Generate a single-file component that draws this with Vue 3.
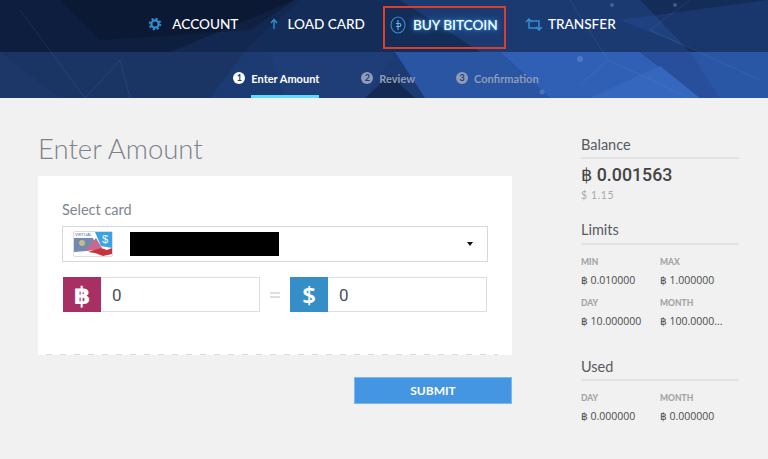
<template>
  <div class="page">
    <header class="hero">
      <svg class="hero-bg" viewBox="0 0 768 98" preserveAspectRatio="none">
        <rect width="768" height="98" fill="#1d3b73" />
        <polygon points="0,0 300,0 250,45 210,98 0,98" fill="#1a3464" />
        <polygon points="0,52 60,98 0,98" fill="#1c3768" />
        <polygon points="270,52 395,52 365,98 285,98" fill="#1f3e78" />
        <polygon points="390,75 415,98 365,98" fill="#152a52" />
        <polygon points="395,52 500,52 550,98 425,98" fill="#2a55a3" />
        <polygon points="500,52 640,52 700,98 550,98" fill="#3060b6" />
        <polygon points="640,52 768,52 768,98 700,98" fill="#284f9c" />
        <polygon points="690,52 768,52 768,98 720,98" fill="#2a56a6" />
        <polygon points="590,98 660,66 700,98" fill="#3667bf" />
        <rect width="768" height="52" fill="#0b1a38" opacity="0.45" />
        <polygon points="0,0 295,0 170,52 0,52" fill="#0a1630" opacity="0.55" />
        <polygon points="60,0 295,0 250,30 100,40" fill="#081226" opacity="0.35" />
        <polygon points="400,0 640,0 690,52 480,52" fill="#2a56a3" opacity="0.35" />
        <polygon points="620,20 768,0 768,52 700,52" fill="#2a54a0" opacity="0.3" />
        <g stroke="#7c9ad0" stroke-width="0.5" opacity="0.3" fill="none">
          <path d="M20 10 L85 98 M85 98 L120 60 L130 98 M580 85 L608 60 L690 98 M608 60 L570 0 M690 0 L650 30 L760 80" />
        </g>
        <g fill="#7fa0d8" opacity="0.4">
          <circle cx="580" cy="59" r="3" />
          <circle cx="612" cy="5" r="2" />
          <circle cx="675" cy="5" r="2" />
          <circle cx="542" cy="92" r="2.5" />
        </g>
      </svg>

      <nav class="nav">
        <a v-for="item in navItems" :key="item.label" class="nav-item" :class="{ active: item.active }">
          <svg v-if="item.icon === 'gear'" class="nav-icon gear" viewBox="0 0 14 14">
            <circle cx="7" cy="7" r="3.6" fill="none" stroke="#2f8fd0" stroke-width="2.2" />
            <circle cx="7" cy="7" r="5.2" fill="none" stroke="#2f8fd0" stroke-width="2.2" stroke-dasharray="2 2.08" />
          </svg>
          <svg v-else-if="item.icon === 'up'" class="nav-icon up" viewBox="0 0 8 12">
            <path d="M4 11V2M1 5l3-3.5L7 5" fill="none" stroke="#2f8fd0" stroke-width="1.4" />
          </svg>
          <svg v-else-if="item.icon === 'coin'" class="nav-icon coin" viewBox="0 0 16 18">
            <ellipse cx="8" cy="9" rx="7" ry="8" fill="none" stroke="#2f8fd0" stroke-width="1.1" />
            <path d="M8 4v10M6 7.5h3.4a1.3 1.3 0 0 1 0 3H6" fill="none" stroke="#5db5ee" stroke-width="1.1" />
          </svg>
          <svg v-else class="nav-icon swap" viewBox="0 0 18 13">
            <path d="M4 1v9h10M1 4l3-3 3 3M14 12V3H5M11 9l3 3 3-3" fill="none" stroke="#2f8fd0" stroke-width="1.5" />
          </svg>
          <span>{{ item.label }}</span>
        </a>
      </nav>

      <div class="steps">
        <div v-for="(step, i) in steps" :key="step" class="step" :class="{ current: i === 0 }">
          <span class="step-num">{{ i + 1 }}</span>
          <span class="step-label">{{ step }}</span>
        </div>
      </div>
    </header>

    <main class="content">
      <section class="left">
        <h1 class="title">Enter Amount</h1>
        <div class="card">
          <label class="field-label">Select card</label>
          <div class="select">
            <svg class="card-thumb" viewBox="0 0 40 26">
              <rect x="0.5" y="0.5" width="39" height="25" rx="1.5" fill="#fff" stroke="#ddd" />
              <polygon points="1,7 20,7 24,18 14,20 1,21" fill="#6f8bb0" />
              <circle cx="9" cy="12" r="3" fill="#c9b88a" />
              <polygon points="12,19 23,7 29,17 25,20" fill="#c8688f" />
              <polygon points="15,21 28,17 34,19 39,17 39,23 30,25 22,22" fill="#c8323f" />
              <polygon points="22,1 39,1 39,17 28,15" fill="#3aa3e6" />
              <text x="29" y="12" class="thumb-dollar">$</text>
              <text x="2" y="5" class="thumb-text">VIRTUAL</text>
            </svg>
            <div class="redacted"></div>
            <span class="caret"></span>
          </div>
          <div class="amounts">
            <div class="amount">
              <span class="addon addon-btc">฿</span>
              <span class="amount-value">0</span>
            </div>
            <span class="equals">=</span>
            <div class="amount">
              <span class="addon addon-usd">$</span>
              <span class="amount-value">0</span>
            </div>
          </div>
        </div>
        <button class="submit">SUBMIT</button>
      </section>

      <aside class="side">
        <h2 class="side-title">Balance</h2>
        <div class="balance">฿ 0.001563</div>
        <div class="balance-usd">$ 1.15</div>

        <h2 class="side-title limits-title">Limits</h2>
        <div class="stats">
          <div v-for="s in limits" :key="s.label">
            <div class="stat-label">{{ s.label }}</div>
            <div class="stat-value">{{ s.value }}</div>
          </div>
        </div>

        <h2 class="side-title used-title">Used</h2>
        <div class="stats">
          <div v-for="s in used" :key="s.label">
            <div class="stat-label">{{ s.label }}</div>
            <div class="stat-value">{{ s.value }}</div>
          </div>
        </div>
      </aside>
    </main>
  </div>
</template>

<script setup>
const navItems = [
  { label: 'ACCOUNT', icon: 'gear' },
  { label: 'LOAD CARD', icon: 'up' },
  { label: 'BUY BITCOIN', icon: 'coin', active: true },
  { label: 'TRANSFER', icon: 'swap' }
]

const steps = ['Enter Amount', 'Review', 'Confirmation']

const limits = [
  { label: 'MIN', value: '฿ 0.010000' },
  { label: 'MAX', value: '฿ 1.000000' },
  { label: 'DAY', value: '฿ 10.000000' },
  { label: 'MONTH', value: '฿ 100.0000...' }
]

const used = [
  { label: 'DAY', value: '฿ 0.000000' },
  { label: 'MONTH', value: '฿ 0.000000' }
]
</script>

<style>
html, body {
  margin: 0;
  background: #f1f1f1;
}
</style>

<style scoped>
.page {
  width: 768px;
  height: 459px;
  overflow: hidden;
  background: #f1f1f1;
  font-family: Lato, "DejaVu Sans", sans-serif;
  color: #444;
}

.hero {
  position: relative;
  height: 98px;
}

.hero-bg {
  position: absolute;
  inset: 0;
  width: 100%;
  height: 100%;
}

.nav {
  position: relative;
  display: flex;
  justify-content: center;
  height: 52px;
  padding-top: 6px;
  padding-right: 4px;
  box-sizing: border-box;
}

.nav-item {
  display: flex;
  align-items: center;
  height: 43px;
  box-sizing: border-box;
  padding-bottom: 7px;
  color: #fff;
  font-size: 13.6px;
  font-weight: 500;
  white-space: nowrap;
}

.nav-item:nth-child(1) { margin-right: 32px; }
.nav-item:nth-child(2) { margin-right: 18px; }
.nav-item:nth-child(3) { margin-right: 19px; }

.nav-item.active {
  border: 2px solid #d9402a;
  width: 123px;
  padding-left: 5px;
  padding-bottom: 5px;
  text-shadow: 0 0 6px #3fa9f5, 0 0 2px #3fa9f5;
}

.nav-icon {
  flex: none;
}

.gear { width: 14px; height: 14px; margin-right: 10px; }
.up { width: 8px; height: 12px; margin-right: 9px; }
.coin { width: 16px; height: 18px; margin-right: 7px; }
.swap { width: 18px; height: 13px; margin-right: 5px; }

.steps {
  position: relative;
  display: flex;
  justify-content: center;
  height: 46px;
  padding-left: 4px;
  box-sizing: border-box;
}

.step {
  display: flex;
  align-items: flex-start;
  height: 46px;
  box-sizing: border-box;
  padding-top: 20px;
  color: #8e9cb8;
  font-size: 11px;
  font-weight: 700;
}

.step:nth-child(1) { margin-right: 42px; }
.step:nth-child(2) { margin-right: 41px; }

.step-num {
  width: 12px;
  height: 12px;
  margin-right: 6px;
  border-radius: 50%;
  background: #8e9cb8;
  color: #1f3e78;
  font-size: 9px;
  line-height: 12px;
  text-align: center;
}

.step-label {
  position: relative;
  line-height: 13px;
}

.step.current {
  color: #fff;
}

.step.current .step-num {
  background: #fff;
}

.step.current .step-label::after {
  content: "";
  position: absolute;
  left: 0;
  right: 0;
  top: 23px;
  height: 3px;
  background: #5fdcf5;
}

.content {
  display: flex;
  padding-left: 38px;
}

.left {
  width: 474px;
  display: flex;
  flex-direction: column;
}

.title {
  margin: 33px 0 10px;
  height: 35px;
  font-size: 27.5px;
  line-height: 35px;
  font-weight: 300;
  color: #7d838a;
}

.card {
  position: relative;
  height: 179px;
  box-sizing: border-box;
  padding: 25px 24px 0;
  background: #fff;
}

.card::after {
  content: "";
  position: absolute;
  left: 8px;
  right: 14px;
  bottom: 0;
  height: 1px;
  background: repeating-linear-gradient(90deg, #dcdcdc 0 6px, transparent 6px 14px);
}

.field-label {
  display: block;
  height: 25px;
  font-size: 14.5px;
  line-height: 17px;
  color: #80868f;
}

.select {
  position: relative;
  display: flex;
  align-items: center;
  width: 426px;
  height: 36px;
  box-sizing: border-box;
  padding-left: 10px;
  border: 1px solid #d8d8d8;
}

.card-thumb {
  width: 40px;
  height: 26px;
  flex: none;
}

.thumb-dollar {
  font-family: "Liberation Sans", sans-serif;
  font-size: 11px;
  fill: #fff;
}

.thumb-text {
  font-family: "Liberation Sans", sans-serif;
  font-size: 4px;
  fill: #3d6fa8;
}

.redacted {
  width: 149px;
  height: 24px;
  margin-left: 17px;
  background: #000;
}

.caret {
  position: absolute;
  right: 14px;
  top: 15px;
  border-left: 3.5px solid transparent;
  border-right: 3.5px solid transparent;
  border-top: 4px solid #111;
}

.amounts {
  display: flex;
  align-items: center;
  margin-top: 15px;
  margin-left: 1px;
}

.amount {
  display: flex;
  width: 197px;
  height: 35px;
  box-sizing: border-box;
  border: 1px solid #dedede;
  border-left: none;
}

.addon {
  width: 38px;
  height: 35px;
  margin-top: -1px;
  color: #fff;
  font-family: "Noto Sans", "DejaVu Sans", sans-serif;
  font-size: 24px;
  font-weight: 600;
  line-height: 35px;
  text-align: center;
}

.addon-btc { background: #a82f63; }
.addon-usd { background: #368ec6; }

.amount-value {
  margin-left: 11px;
  font-family: Roboto, sans-serif;
  font-size: 17px;
  font-weight: 400;
  line-height: 34px;
  color: #4a4f57;
}

.equals {
  width: 30px;
  text-align: center;
  color: #dddddd;
  font-size: 22px;
  font-weight: 700;
}

.submit {
  align-self: flex-end;
  width: 158px;
  height: 27px;
  margin-top: 22px;
  border: 1px solid #7ab8ee;
  background: #4496e2;
  color: #fff;
  font-family: Lato, sans-serif;
  font-size: 12px;
  font-weight: 700;
  padding: 0;
}

.side {
  width: 158px;
  margin-left: 69px;
  padding-top: 39px;
}

.side-title {
  margin: 0;
  height: 22px;
  box-sizing: border-box;
  border-bottom: 2px solid #e2e2e2;
  font-size: 14.5px;
  font-weight: 400;
  line-height: 16px;
  color: #555b63;
}

.balance {
  margin-top: 5px;
  font-family: Roboto, "DejaVu Sans", sans-serif;
  font-size: 17.8px;
  font-weight: 500;
  line-height: 22px;
  color: #444;
}

.balance-usd {
  margin-top: 3px;
  font-size: 10.5px;
  line-height: 13px;
  color: #aaa;
  letter-spacing: 0.6px;
}

.limits-title {
  margin-top: 20px;
  height: 23px;
}

.used-title {
  margin-top: 30px;
  height: 22px;
}

.stats {
  display: grid;
  grid-template-columns: 79px 79px;
  row-gap: 9px;
  padding-top: 11px;
}

.stat-label {
  height: 17px;
  font-size: 8.5px;
  font-weight: 900;
  line-height: 13px;
  color: #a4a4a4;
}

.stat-value {
  font-family: "Open Sans", "DejaVu Sans", sans-serif;
  font-size: 10.5px;
  line-height: 15px;
  color: #4d4d4d;
  white-space: nowrap;
}
</style>
